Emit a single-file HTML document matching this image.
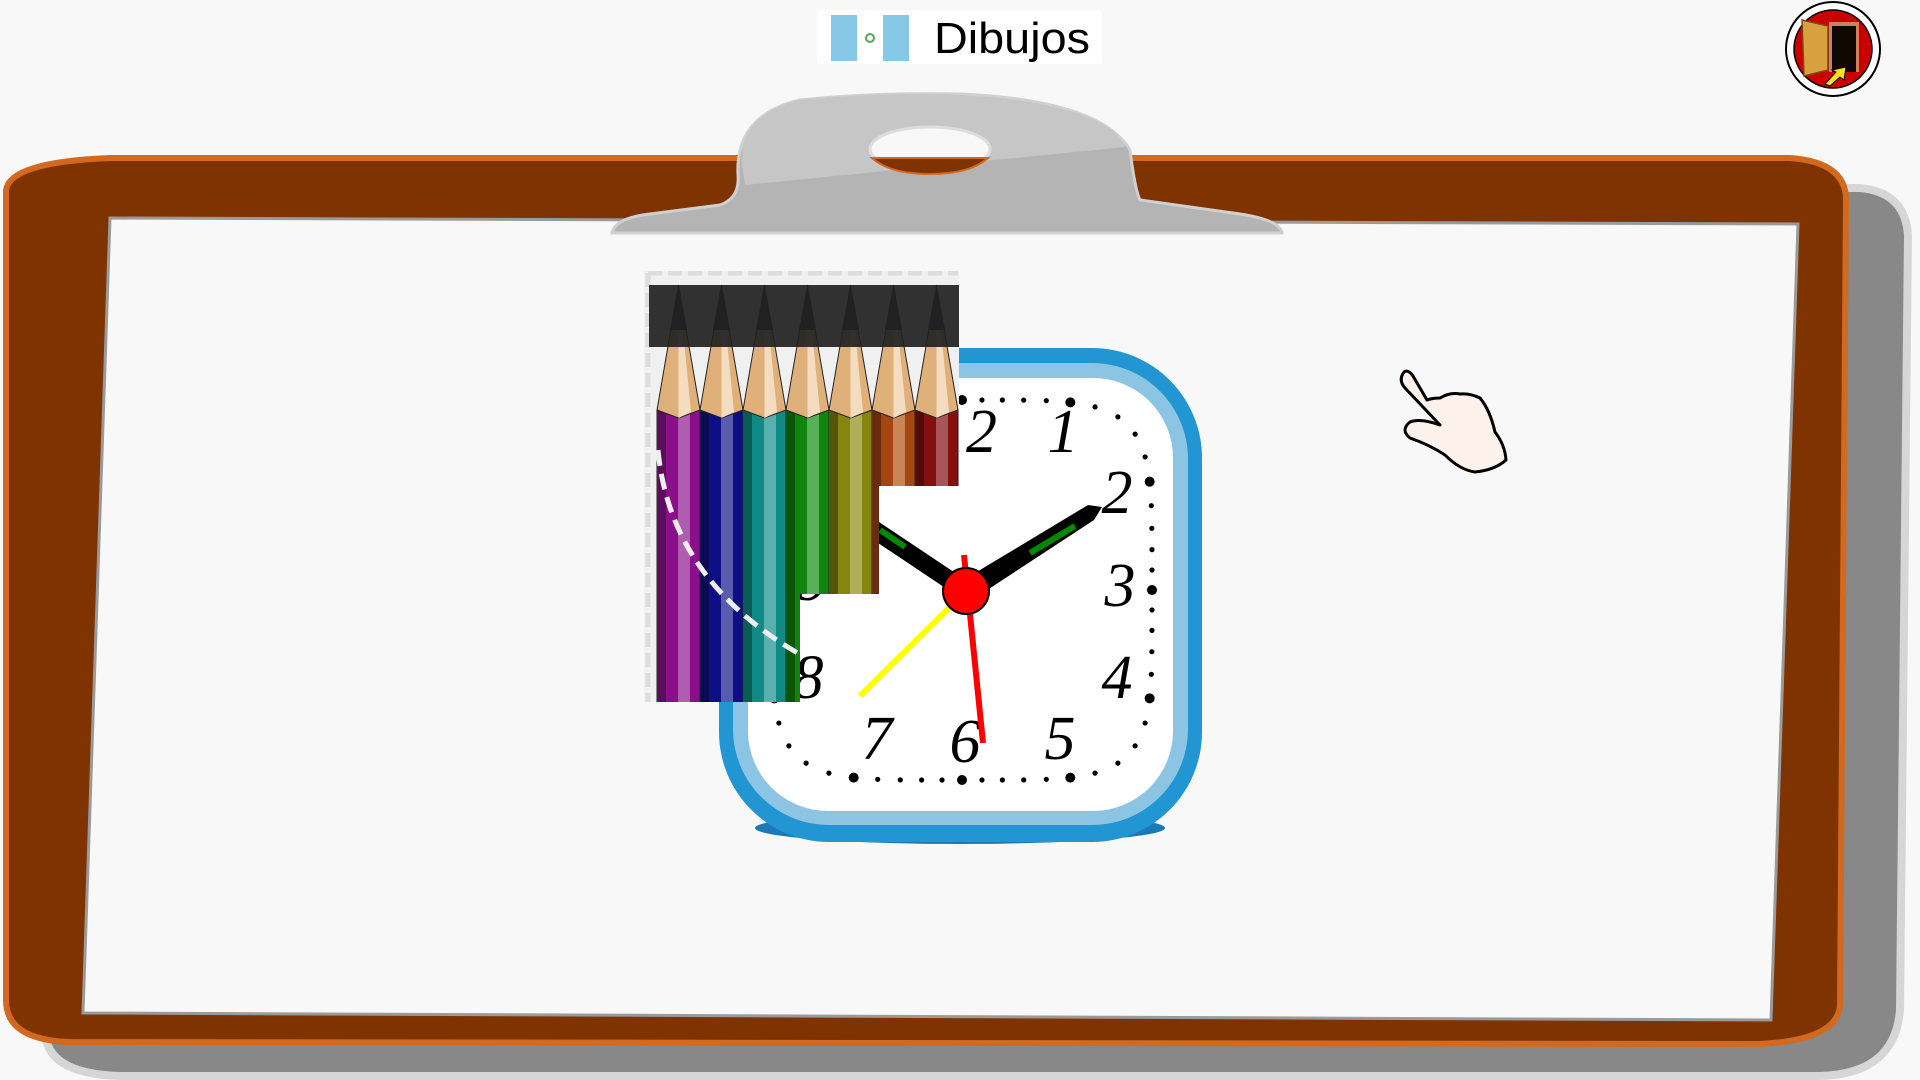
<!DOCTYPE html>
<html><head><meta charset="utf-8"><style>
html,body{margin:0;padding:0;background:#f8f8f8;width:1920px;height:1080px;overflow:hidden}
svg{display:block}
</style></head><body>
<svg width="1920" height="1080" viewBox="0 0 1920 1080" xmlns="http://www.w3.org/2000/svg">
<defs><clipPath id="cp"><path d="M644,271 L959,271 L959,486 L879,486 L879,594 L800,594 L800,702 L644,702 Z"/></clipPath></defs>
<rect width="1920" height="1080" fill="#f8f8f8"/>
<path d="M60,230 Q60,190 150,188 L1860,188 Q1905,192 1908,235 L1900,1010 Q1895,1074 1820,1076 L120,1076 Q45,1074 45,1030 Z" fill="#888" stroke="#d6d6d6" stroke-width="8"/>
<path d="M6,190 Q10,162 110,158 L1790,158 Q1846,162 1846,200 L1840,1005 Q1838,1040 1760,1044 L70,1042 Q6,1040 6,1000 Z" fill="#7f3300" stroke="#d2691e" stroke-width="6"/>
<polygon points="110,218 1798,224 1771,1020 83,1013" fill="#f8f8f8" stroke="#9a9a9a" stroke-width="3"/>
<path d="M612,233 Q615,218 650,214 L720,205 Q740,198 738,175 Q735,115 800,100 Q880,92 960,94 Q1100,100 1130,150 Q1135,190 1140,200 L1240,214 Q1280,220 1282,233 Z" fill="#b4b4b4" stroke="#d0d0d0" stroke-width="3"/>
<path d="M745,185 L1125,147 Q1110,105 960,95 Q880,92 800,100 Q738,115 742,165 Z" fill="#c6c6c6"/>
<ellipse cx="930" cy="149" rx="60" ry="22" fill="#f8f8f8" stroke="#ddd" stroke-width="3"/>
<path d="M872,158 L988,158 Q970,174 930,174 Q890,174 872,158 Z" fill="#7f3300" stroke="#d2691e" stroke-width="2"/>
<ellipse cx="960" cy="828" rx="205" ry="16" fill="#1a7ab8"/>
<rect x="719" y="348" width="483" height="494" rx="110" fill="#2196d3"/>
<rect x="733" y="363" width="455" height="462" rx="96" fill="#8cc4e4"/>
<rect x="748" y="378" width="425" height="433" rx="80" fill="#fff"/>
<g id="dots" fill="#000"></g>
<g font-family="Liberation Serif, serif" font-style="italic" font-size="62" text-anchor="middle" fill="#000">
<text x="966" y="452">12</text><text x="1063" y="452">1</text><text x="1117" y="513">2</text>
<text x="1120" y="606">3</text><text x="1117" y="698">4</text><text x="1060" y="759">5</text>
<text x="965" y="762">6</text><text x="877" y="759">7</text><text x="808" y="698">8</text>
<text x="812" y="600">9</text>
</g>
<line x1="966" y1="591" x2="860" y2="696" stroke="#ff0" stroke-width="6"/>
<line x1="966" y1="591" x2="830" y2="500" stroke="#000" stroke-width="18"/>
<line x1="880" y1="530" x2="905" y2="547" stroke="#080" stroke-width="6"/>
<path d="M960,582 L1088,505 L1102,507 L1094,520 L972,600 Z" fill="#000"/>
<line x1="1030" y1="553" x2="1075" y2="526" stroke="#080" stroke-width="6"/>
<line x1="964" y1="555" x2="983" y2="743" stroke="#f00" stroke-width="6"/>
<circle cx="966" cy="591" r="23" fill="#f00" stroke="#000" stroke-width="2"/>
<g id="pen" clip-path="url(#cp)"></g>
<path d="M1404,372 Q1398,380 1405,388 L1440,425 Q1420,418 1410,422 Q1400,430 1410,438 Q1430,445 1445,455 Q1460,470 1475,472 Q1495,470 1506,460 Q1505,445 1495,432 Q1490,410 1480,398 Q1470,393 1460,394 Q1450,392 1440,398 Q1432,398 1427,400 L1413,376 Q1408,369 1404,372 Z" fill="#fdf1eb" stroke="#000" stroke-width="3" stroke-linejoin="round"/>
<rect x="817" y="10" width="285" height="54" rx="3" fill="#fff"/>
<rect x="831" y="15" width="26" height="46" fill="#87c8e6"/>
<rect x="883" y="15" width="26" height="46" fill="#87c8e6"/>
<circle cx="870" cy="38" r="4" fill="none" stroke="#5a5" stroke-width="2"/>
<text x="934" y="53" font-family="Liberation Sans, sans-serif" font-size="44" fill="#000" textLength="156" lengthAdjust="spacingAndGlyphs">Dibujos</text>
<circle cx="1833" cy="49" r="47" fill="#fff" stroke="#000" stroke-width="2"/>
<circle cx="1833" cy="49" r="39" fill="#c00" stroke="#000" stroke-width="1.5"/>
<rect x="1829" y="22" width="30" height="50" fill="#d08060"/>
<rect x="1832" y="26" width="24" height="46" fill="#100800"/>
<path d="M1802,20 L1828,26 L1828,70 L1804,76 Z" fill="#d9a040" stroke="#7a4a10" stroke-width="1.5"/>
<path d="M1825,84 L1836,72 L1832,70 L1846,67 L1844,80 L1840,77 L1830,86 Z" fill="#ffe020" stroke="#000" stroke-width="1"/>
</svg>
<script>
var NS="http://www.w3.org/2000/svg";
function el(t,a,p){var e=document.createElementNS(NS,t);for(var k in a)e.setAttribute(k,a[k]);p.appendChild(e);return e;}
var d=document.getElementById('dots');
for(var i=0;i<60;i++){var th=i*Math.PI/30,s=Math.sin(th),c=-Math.cos(th);
var n=5,t=190/Math.pow(Math.pow(Math.abs(s),n)+Math.pow(Math.abs(c),n),1/n);
el('circle',{cx:962+s*t,cy:590+c*t,r:(i%5==0)?5:2.6},d);}
var g=document.getElementById('pen');
el('rect',{x:644,y:271,width:315,height:431,fill:'#f0f0f0'},g);
el('path',{d:'M648,273 L958,273 M648,273 L648,702',stroke:'#ddd','stroke-width':5,'stroke-dasharray':'14 6',fill:'none'},g);
var cols=[['#8b0f8b','#b05cb0','#5c0c5c'],['#0f0f85','#5a5aaf','#0a0a55'],['#0f8a85','#5aafaf','#0a5a55'],['#0f850f','#5aaf5a','#0a550a'],['#85850f','#afaf5a','#55550a'],['#a5450f','#c88555','#6a2c0a'],['#850f0f','#aa5555','#550a0a']];
for(var j=0;j<7;j++){var x=657+j*43,cx=x+21.5,c=cols[j];
el('rect',{x:x,y:410,width:43,height:300,fill:c[0],stroke:'#222','stroke-width':1},g);
el('rect',{x:x+1,y:410,width:8,height:300,fill:c[2]},g);
el('rect',{x:x+21,y:410,width:12,height:300,fill:c[1]},g);
el('path',{d:'M'+cx+',285 L'+(x+43)+',410 L'+cx+',418 L'+x+',410 Z',fill:'#e0b07a',stroke:'#222','stroke-width':1},g);
el('path',{d:'M'+cx+',285 L'+(x+34)+',412 L'+cx+',418 Z',fill:'#f3dcc0'},g);
el('path',{d:'M'+cx+',285 L'+(x+30)+',330 L'+(x+13)+',330 Z',fill:'#111'},g);}
el('rect',{x:649,y:285,width:310,height:62,fill:'#222',opacity:0.93},g);
el('path',{d:'M658,450 Q670,580 801,655',stroke:'#eee','stroke-width':5,'stroke-dasharray':'16 8',fill:'none'},g);
</script>
</body></html>
